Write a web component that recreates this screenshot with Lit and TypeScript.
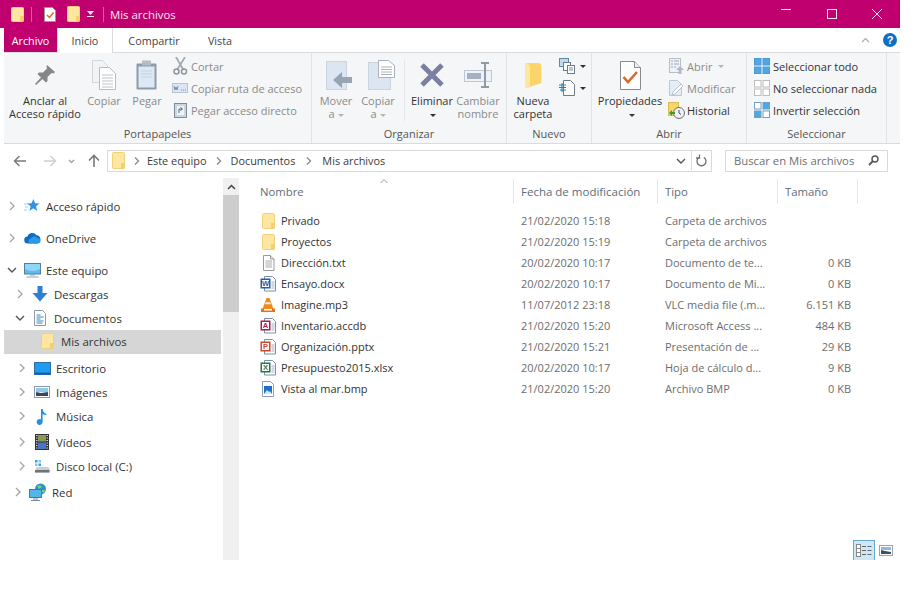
import { LitElement, css, html, svg } from "lit";
import { customElement } from "lit/decorators.js";

const ico = (w: number, h: number, body: unknown) =>
  html`<svg class="ico" width=${w} height=${h} viewBox="0 0 ${w} ${h}">${body}</svg>`;

const folder = (w = 14, h = 17) =>
  ico(w, h, svg`
    <rect x=".5" y=".5" width=${w - 1} height=${h - 1} rx="1" fill="#fde6a0" stroke="#f0d078"/>
    <path d="M${w - 4} ${h - 6}h3.5v5.5h-3.5z" fill="#f3cf70"/>`);

const doc = ico(13, 16, svg`
  <path d="M1.5.5h7l3.5 3.5v11.500h-10.500z" fill="#fff" stroke="#9a9a9a"/>
  <path d="M8.500.5v3.500h3.500" fill="#eee" stroke="#9a9a9a"/>
  <path d="M3.500 6h6.500M3.500 8h6.500M3.500 10h6.500M3.500 12h6.500" stroke="#aaa"/>`);

const office = (letter: string, color: string) =>
  ico(16, 16, svg`
    <path d="M4.500.5h8l3 3v11.500h-11z" fill="#fff" stroke="#7d8ea8"/>
    <path d="M11.500 6h3M11.500 8h3M11.500 10h3M11.500 12h3" stroke="#9eb0c8"/>
    <rect x=".5" y="2.500" width="10" height="10" fill=${color}/>
    <rect x="2" y="4" width="7" height="7" fill="#fff"/>
    <text x="5.500" y="10.200" text-anchor="middle" font-size="7.500" font-weight="700" font-family="Liberation Sans" fill=${color}>${letter}</text>`);

const vlc = ico(16, 16, svg`
  <path d="M6.500 1h3l4 11h-11z" fill="#ef8a1c"/>
  <path d="M5.600 5.200h4.800l.6 2h-6z" fill="#f2f2f2"/>
  <path d="M1 11.500h3v2h8v-2h3v3.500h-14z" fill="#e8741a"/>`);

const bmp = ico(14, 16, svg`
  <path d="M1.500.5h8l3 3v12h-11z" fill="#fff" stroke="#8aa0b8"/>
  <rect x="3" y="5" width="8" height="8" fill="#1f6fc4"/>
  <path d="M3 13l3-4 2 2 1-1 2 3z" fill="#cfe6fa"/>`);

const star = ico(16, 16, svg`
  <path d="M9.500 1l1.600 4.300 4.400.2-3.500 2.800 1.200 4.600-3.900-2.600-3.900 2.600 1.200-4.600-3.500-2.800 4.400-.2z" fill="#2f94e6"/>
  <path d="M0 6h4M1 9h3M0 12h3" stroke="#9fd0f5"/>`);

const cloud = ico(17, 12, svg`
  <path d="M4 11.500a3.500 3.500 0 0 1-.5-7 5 5 0 0 1 9-1.200 4.200 4.200 0 0 1 1 8.200z" fill="#0f6cc4"/>
  <path d="M6 11.500a2.500 2.500 0 0 1 .6-4.800 4 4 0 0 1 7-.4 2.600 2.600 0 0 1 .4 5.200z" fill="#2a9be8"/>`);

const monitor = ico(17, 15, svg`
  <rect x=".5" y=".5" width="16" height="10.500" fill="#5cbcf2" stroke="#5d7d96"/>
  <path d="M1 1h15v5q-7 4-15 0z" fill="#8fd6f8"/>
  <path d="M6 12h5M2.500 14h12" stroke="#8aa0b0" stroke-width="1.200"/>`);

const downArrow = ico(16, 16, svg`<path d="M5.500 0h5v7h5l-7.500 8.500-7.500-8.500h5z" fill="#2f7fd6"/>`);

const docsIco = ico(14, 16, svg`
  <path d="M1.500.5h8l3 3v12h-11z" fill="#fff" stroke="#8f9aa5"/>
  <path d="M3.500 5h4M3.500 7h7M3.500 9h4M3.500 11h7M3.500 13h6" stroke="#3f89b5"/>`);

const desk = ico(17, 13, svg`
  <rect x=".5" y=".5" width="16" height="12" fill="#1f9bef" stroke="#2f6ea3"/>
  <path d="M1 10.500h15v2h-15z" fill="#0e62b4"/>`);

const pics = ico(16, 12, svg`
  <rect x=".5" y=".5" width="15" height="11" fill="#fff" stroke="#8c9aa8"/>
  <path d="M2 2h12v4h-12z" fill="#8fc7ee"/>
  <path d="M2 6l5 1 7-1v4h-12z" fill="#33495e"/>`);

const note = ico(12, 17, svg`
  <path d="M5 1h1.600q.6 4 4.400 5.500-1.500 1-4.400-.6v8a3 3 0 1 1-1.600-2.600z" fill="#1e93e6"/>`);

const film = ico(14, 16, svg`
  <rect width="14" height="16" fill="#333"/>
  <path d="M1 1.500h1.500M1 4h1.500M1 6.500h1.500M1 9h1.500M1 11.500h1.500M1 14h1.500M11.500 1.500h1.500M11.500 4h1.500M11.500 6.500h1.500M11.500 9h1.500M11.500 11.500h1.500M11.500 14h1.500" stroke="#ddd"/>
  <rect x="3" y="1" width="8" height="6.500" fill="#8a9a55"/>
  <rect x="3" y="8.500" width="8" height="6.500" fill="#4a74c8"/>`);

const disk = ico(16, 14, svg`
  <rect x="1" y="1" width="2.500" height="2.500" fill="#2fa5e0"/>
  <rect x="4.500" y="1" width="2.500" height="2.500" fill="#7ccbee"/>
  <rect x="1" y="4.500" width="2.500" height="2.500" fill="#7ccbee"/>
  <rect x="4.500" y="4.500" width="2.500" height="2.500" fill="#2fa5e0"/>
  <path d="M2 9l1-1h11l1.500 1.500v4h-14.500z" fill="#c9ced2"/>
  <path d="M1 11h14.500v2.500h-14.500z" fill="#6d7378"/>`);

const network = ico(19, 18, svg`
  <circle cx="11.500" cy="6" r="5.500" fill="#2c8fd0"/>
  <path d="M8 3l3-1 2 2-3 2zM13 7l3 0-1 3-2-1z" fill="#7ed06a"/>
  <rect x=".5" y="6.500" width="12" height="8" fill="#52b6ee" stroke="#3c7da8"/>
  <path d="M4 16h5M2 17.500h9" stroke="#7a8e9e"/>`);

const chevRight = ico(8, 10, svg`<path d="M2 1l4 4-4 4" fill="none" stroke="#a6a6a6" stroke-width="1.400"/>`);
const chevDown = ico(10, 8, svg`<path d="M1 2l4 4 4-4" fill="none" stroke="#555" stroke-width="1.400"/>`);

const pin = ico(24, 24, svg`
  <path d="M14 2l8 7-1.500 1.500-2-.5-4 4 0 4-1.500 1.500-3.500-3.500-6.500 6-1-1 6-6.500-3.500-3.500 1.500-1.500 4 0 4-4-.5-2z" fill="#85868a"/>`);

const copyBig = ico(26, 30, svg`
  <path d="M1.500.5h10l5 5v17h-15z" fill="#f1f3f6" stroke="#d3d7dc"/>
  <path d="M8.500 7.500h10l6 6v16h-16z" fill="#fff" stroke="#b5bcc4"/>
  <path d="M11 15h11M11 18h11M11 21h11M11 24h11M11 27h11" stroke="#bcc3ca"/>`);

const paste = ico(22, 30, svg`
  <rect x=".5" y="3.500" width="20" height="26" rx="1" fill="#8e9aa8"/>
  <rect x="2.500" y="6.500" width="16" height="21" fill="#dce8f5"/>
  <rect x="6" y=".5" width="9" height="5" fill="#b4bcc5"/>
  <path d="M5 11h11M5 14h11M5 17h11" stroke="#c4d3e3"/>`);

const scissors = ico(15, 18, svg`
  <path d="M3 0l7.500 13M12 0l-8 13" stroke="#a5abb2" stroke-width="1.800" fill="none"/>
  <circle cx="3.500" cy="14.500" r="2.500" fill="none" stroke="#8e96a0" stroke-width="1.500"/>
  <circle cx="11" cy="14.500" r="2.500" fill="none" stroke="#8e96a0" stroke-width="1.500"/>`);

const pathIco = ico(16, 10, svg`
  <rect x=".5" y=".5" width="15" height="9" fill="#dce6f2" stroke="#b8c4d2"/>
  <path d="M2 3l1 4 1-3 1 3 1-4" stroke="#7c8ea4" fill="none"/>
  <path d="M9 7h1M11 7h1M13 7h1" stroke="#7c8ea4"/>`);

const shortcut = ico(13, 16, svg`
  <rect x=".5" y="1.500" width="12" height="14" fill="#c8d6e5" stroke="#7e8c9b"/>
  <rect x="3" y="4" width="7" height="9" fill="#eef3f8"/>
  <path d="M5 11v-4h3M6.500 5.500l2 1.500-2 1.500" fill="none" stroke="#566"/>`);

const move = ico(33, 29, svg`<g transform="translate(6)">
  <rect x=".5" y=".5" width="20" height="28" fill="#dce6f3" stroke="#cbd5e2"/>
  <path d="M26 16h-10v-5l-9 8 9 8v-5h10z" fill="#96a4b4"/></g>`);

const copyTo = ico(33, 30, svg`<g transform="translate(6)">
  <rect x=".5" y="2.500" width="22" height="27" fill="#dce6f3" stroke="#cbd5e2"/>
  <path d="M10.500.5h10l6 5v12h-16z" fill="#fff" stroke="#a9b1ba"/>
  <path d="M13 7h11M13 9.500h11M13 12h11M13 14.500h11" stroke="#aab2bb"/></g>`);

const cross = ico(26, 26, svg`<path d="M3 3l20 20M23 3l-20 20" stroke="#7a7fa3" stroke-width="5"/>`);

const rename = ico(28, 26, svg`
  <rect x=".5" y="8.500" width="27" height="11" fill="#eef3f8" stroke="#bcc8d6"/>
  <rect x="3" y="11" width="14" height="6" fill="#a5b1c2"/>
  <path d="M17 1h8M17 25h8M21 1v24" stroke="#8f9aa8" stroke-width="2"/>`);

const bigFolder = ico(19, 27, svg`
  <path d="M1 1h13q3 0 3.500 3v17l-15 5-1.500-2z" fill="#fbd569"/>
  <path d="M1 1q4 0 5 4v20l-3 1-2-2z" fill="#fde79c"/>`);

const newItem = ico(16, 16, svg`
  <rect x=".5" y=".5" width="9" height="8" fill="#c5d9ea" stroke="#5e8aa8"/>
  <rect x="4.500" y="4.500" width="7" height="8" fill="#fff" stroke="#6a7c8c"/>
  <rect x="8.500" y="7.500" width="7" height="8" fill="#fff" stroke="#6a7c8c"/>
  <path d="M10 10h4M10 12h4" stroke="#888"/>`);

const easyAccess = ico(16, 16, svg`
  <path d="M4.500.5h7l4 4v11h-11z" fill="#fff" stroke="#6e7a86"/>
  <path d="M0 5h7M0 7.500h7M1 10h6M3 3v9" stroke="#2a7db0"/>`);

const props = ico(21, 29, svg`
  <path d="M.5.5h14l6 6v22h-20z" fill="#fff" stroke="#8b8b8b"/>
  <path d="M14.500.5v6h6" fill="#eee" stroke="#8b8b8b"/>
  <path d="M3.500 16l4.500 5 9-10" fill="none" stroke="#e0662a" stroke-width="2.600"/>`);

const openIco = ico(15, 16, svg`
  <rect x=".5" y=".5" width="11" height="14" fill="#eef2f6" stroke="#b6bec8"/>
  <path d="M2 3h2M5 3h5M2 6h2M5 6h5M2 9h2M5 9h2" stroke="#98a4b2"/>
  <path d="M11 8l4 4h-2.500v4h-3v-4h-2.500z" fill="#b0bac4"/>`);

const modify = ico(15, 16, svg`
  <path d="M.5.5h8l4 4v11h-12z" fill="#e4edf7" stroke="#bcc8d6"/>
  <path d="M4 12l8-8 2 2-8 8-3 1z" fill="#fff" stroke="#b8c2cc"/>`);

const history = ico(17, 17, svg`
  <rect x=".5" y=".5" width="10" height="13" fill="#f5d768" stroke="#dcbc50"/>
  <circle cx="11" cy="11" r="5.500" fill="#eef0f2" stroke="#6e7276"/>
  <path d="M11 8v3l2 1.500" fill="none" stroke="#555"/>
  <path d="M1 11l3-3v2h3v2h-3v2z" fill="#3d9a3a"/>`);

const selGrid = (a: string, b: string, c: string, d: string, stroke: string) =>
  ico(16, 16, svg`
    <rect x=".5" y=".5" width="6.500" height="6.500" fill=${a} stroke=${stroke}/>
    <rect x="9" y=".5" width="6.500" height="6.500" fill=${b} stroke=${stroke}/>
    <rect x=".5" y="9" width="6.500" height="6.500" fill=${c} stroke=${stroke}/>
    <rect x="9" y="9" width="6.500" height="6.500" fill=${d} stroke=${stroke}/>`);

const checkDoc = ico(12, 15, svg`
  <path d="M.5.5h8l3 3v11h-11z" fill="#fff" stroke="#999"/>
  <path d="M3 8l2.500 2.500 4-5" fill="none" stroke="#e0662a" stroke-width="1.500"/>`);

const arrowLeft = (c: string) =>
  ico(14, 12, svg`<path d="M13 6h-11M6.500 1l-5 5 5 5" fill="none" stroke=${c} stroke-width="1.500"/>`);
const arrowRight = (c: string) =>
  ico(14, 12, svg`<path d="M1 6h11M7.500 1l5 5-5 5" fill="none" stroke=${c} stroke-width="1.500"/>`);
const arrowUp = ico(12, 14, svg`<path d="M6 13v-11M1 6.500l5-5 5 5" fill="none" stroke="#7a7a7a" stroke-width="1.600"/>`);
const caret = html`<i class="caret"></i>`;
const caretGray = html`<i class="caret gray"></i>`;

const navItems = [
  { label: "Acceso rápido", indent: 1, gap: 16, icon: star, open: false },
  { label: "OneDrive", indent: 1, gap: 8, icon: cloud, open: false },
  { label: "Este equipo", indent: 1, gap: 8, icon: monitor, open: true },
  { label: "Descargas", indent: 9, gap: 0, icon: downArrow, open: false },
  { label: "Documentos", indent: 9, gap: 0, icon: docsIco, open: true },
  { label: "Mis archivos", indent: 16, gap: 0, icon: folder(13, 16), open: false, selected: true },
  { label: "Escritorio", indent: 11, gap: 2, icon: desk, open: false },
  { label: "Imágenes", indent: 11, gap: 0, icon: pics, open: false },
  { label: "Música", indent: 11, gap: 0, icon: note, open: false },
  { label: "Vídeos", indent: 11, gap: 2, icon: film, open: false },
  { label: "Disco local (C:)", indent: 11, gap: 0, icon: disk, open: false },
  { label: "Red", indent: 7, gap: 2, icon: network, open: false },
];

const files = [
  { name: "Privado", icon: folder(13, 16), date: "21/02/2020 15:18", type: "Carpeta de archivos", size: "" },
  { name: "Proyectos", icon: folder(13, 16), date: "21/02/2020 15:19", type: "Carpeta de archivos", size: "" },
  { name: "Dirección.txt", icon: doc, date: "20/02/2020 10:17", type: "Documento de te...", size: "0 KB" },
  { name: "Ensayo.docx", icon: office("W", "#2a5ca8"), date: "20/02/2020 10:17", type: "Documento de Mi...", size: "0 KB" },
  { name: "Imagine.mp3", icon: vlc, date: "11/07/2012 23:18", type: "VLC media file (.m...", size: "6.151 KB" },
  { name: "Inventario.accdb", icon: office("A", "#a3204a"), date: "21/02/2020 15:20", type: "Microsoft Access ...", size: "484 KB" },
  { name: "Organización.pptx", icon: office("P", "#d24726"), date: "21/02/2020 15:21", type: "Presentación de ...", size: "29 KB" },
  { name: "Presupuesto2015.xlsx", icon: office("X", "#1f7a45"), date: "20/02/2020 10:17", type: "Hoja de cálculo d...", size: "9 KB" },
  { name: "Vista al mar.bmp", icon: bmp, date: "21/02/2020 15:20", type: "Archivo BMP", size: "0 KB" },
];

@customElement("app-root")
export class AppRoot extends LitElement {
  static styles = css`
    :host {
      display: block;
      width: 900px;
      height: 560px;
      overflow: hidden;
      font-family: "Open Sans", "Noto Sans", sans-serif;
      font-size: 11px;
      color: #3a3a3a;
      background: #fff;
    }
    .ico { display: block; flex: none; }

    .title {
      height: 28px;
      background: #c1006f;
      color: #fbe6f1;
      display: flex;
      align-items: center;
      padding-left: 11px;
    }
    .title .bar { width: 1px; height: 15px; background: #d65fa3; margin: 0 7px; }
    .title .name { font-size: 11.4px; margin-left: -1px; }
    .qa-doc { margin: 0 11px 0 5px; }
    .qa-arrow { margin: 0 2px 0 7px; border-bottom: 1px solid #f5e0eb; padding-bottom: 1px; }
    .winbtns { margin-left: auto; display: flex; }
    .winbtn { width: 45.5px; display: flex; justify-content: center; }

    .tabs {
      height: 24px;
      margin-left: 4px;
      display: flex;
      align-items: stretch;
      color: #444;
      font-size: 10.8px;
    }
    .tab { display: flex; align-items: center; justify-content: center; }
    .tab.tab-file { width: 53px; background: #c1006f; color: #fff; }
    .tab.tab-home {
      width: 56px;
      box-sizing: border-box;
      margin-bottom: -1px;
      background: #fff;
      border: 1px solid #dadbdc;
      border-width: 0 1px;
      position: relative;
    }
    .tab.tab-share { width: 82px; }
    .tab.tab-view { width: 50px; }
    .tabs-fill {
      flex: 1;
      display: flex;
      align-items: center;
      justify-content: flex-end;
      gap: 13px;
      padding-right: 3px;
    }
    .help {
      width: 14px;
      height: 14px;
      border-radius: 50%;
      background: #0f6fc6;
      color: #fff;
      font: 700 11px/14px "Liberation Sans", sans-serif;
      text-align: center;
    }

    .ribbon {
      height: 90px;
      margin-left: 4px;
      background: #f5f6f7;
      border-top: 1px solid #dadbdc;
      border-bottom: 1px solid #dadbdc;
      display: flex;
    }
    .group {
      display: flex;
      flex-direction: column;
      border-right: 1px solid #e2e3e4;
      box-sizing: border-box;
    }
    .g-clip { width: 308px; }
    .g-org { width: 195px; }
    .g-new { width: 85px; }
    .g-open { width: 155px; }
    .g-sel { width: 140px; }
    .g-body { flex: 1; display: flex; min-height: 0; }
    .g-label { height: 17px; line-height: 15px; text-align: center; color: #555; flex: none; }
    .big {
      display: flex;
      flex-direction: column;
      align-items: center;
      text-align: center;
      white-space: nowrap;
      line-height: 13px;
      color: #333;
      flex: none;
    }
    .big .slot {
      height: 38px;
      padding-top: 3px;
      display: flex;
      align-items: center;
      justify-content: center;
    }
    .big.off { color: #8a8a8a; }
    .w82 { width: 82px; }
    .w36 { width: 36px; }
    .w50 { width: 50px; }
    .w48 { width: 48px; }
    .w54 { width: 54px; }
    .w38 { width: 38px; }
    .w52 { width: 52px; }
    .w76 { width: 76px; }
    .vsep { width: 1px; height: 62px; margin: 6px 0 0 8px; background: #e6e7e8; flex: none; }
    .caret {
      display: inline-block;
      width: 0;
      height: 0;
      border: 3px solid transparent;
      border-top: 3px solid #333;
      border-bottom: 0;
      vertical-align: middle;
      margin-left: 3px;
    }
    .caret.gray { border-top-color: #b5b5b5; }
    .small-col { display: flex; flex-direction: column; padding-top: 2px; }
    .small {
      height: 22px;
      display: flex;
      align-items: center;
      gap: 3px;
      color: #333;
      white-space: nowrap;
    }
    .small.off { color: #8a8a8a; }
    .small .slot { width: 16px; display: flex; justify-content: center; }
    .col-new .small { gap: 2px; }
    .col-sel { margin-left: 7px; }

    .addr { height: 22px; margin-top: 6px; display: flex; align-items: center; }
    .nav-btns {
      width: 107px;
      flex: none;
      display: flex;
      align-items: center;
      padding-left: 13px;
      box-sizing: border-box;
    }
    .nav-btns .fwd { margin-left: 16px; }
    .nav-btns .drop { margin-left: 11px; }
    .nav-btns .up { margin-left: 13px; }
    .path {
      width: 605px;
      flex: none;
      height: 22px;
      box-sizing: border-box;
      border: 1px solid #d9d9d9;
      display: flex;
      align-items: center;
      padding: 0 0 1px 4px;
      font-size: 10.9px;
    }
    .path .crumb { margin: 0 9px 0 9px; }
    .path .last { margin: 0 10px 0 11px; }
    .path .first { margin-left: 9px; margin-right: 7px; }
    .path .end {
      margin-left: auto;
      height: 100%;
      display: flex;
      align-items: center;
      gap: 5px;
    }
    .refresh {
      width: 19px;
      height: 100%;
      border-left: 1px solid #d9d9d9;
      display: flex;
      align-items: center;
      justify-content: center;
    }
    .search {
      width: 163px;
      margin-left: 13px;
      flex: none;
      height: 22px;
      box-sizing: border-box;
      border: 1px solid #d9d9d9;
      display: flex;
      align-items: center;
      justify-content: space-between;
      padding: 0 8px 1px;
      font-size: 11.3px;
      color: #6f6f6f;
    }

    .content { height: 382px; margin-top: 6px; display: flex; }
    .tree { width: 223px; flex: none; padding: 0 2px 0 4px; box-sizing: border-box; font-size: 11.4px; }
    .row { height: 24px; box-sizing: border-box; display: flex; align-items: center; color: #333; }
    .row.selected { background: #d6d6d6; padding-bottom: 2px; }
    .row .arrow { width: 14px; display: flex; justify-content: center; flex: none; }
    .row .pic { width: 18px; display: flex; justify-content: center; flex: none; margin: 0 5px 0 4px; }
    .scroll { width: 16px; flex: none; background: #f0f0f0; }
    .scroll .up { height: 17px; display: flex; align-items: center; justify-content: center; }
    .scroll .thumb { height: 117px; background: #cdcdcd; }

    .pane { flex: 1; display: flex; flex-direction: column; min-width: 0; }
    .list { flex: 1; position: relative; }
    .sort { position: absolute; left: 141px; top: 1px; }
    .cols { display: grid; grid-template-columns: 275px 144px 120px 80px; }
    .head { height: 25px; margin-top: 1px; color: #606c78; font-size: 11.3px; }
    .head > div { border-right: 1px solid #e5e5e5; padding-left: 7px; display: flex; align-items: center; }
    .head > div:first-child { padding-left: 21px; }
    .head .date { font-size: 11.5px; }
    .files { padding-top: 6px; }
    .frow { height: 21px; align-items: center; color: #6d6d6d; }
    .frow > div { padding-left: 7px; white-space: nowrap; }
    .frow .fname { padding-left: 21px; display: flex; align-items: center; color: #333; }
    .frow .fico { width: 16px; margin-right: 5px; display: flex; justify-content: center; }
    .frow .fsize { padding: 0 7px 0 0; text-align: right; }

    .views {
      height: 20px;
      display: flex;
      justify-content: flex-end;
      align-items: flex-start;
      padding-right: 7px;
      flex: none;
    }
    .views .on {
      width: 22px;
      height: 20px;
      box-sizing: border-box;
      background: #cce8f6;
      border: 1px solid #6aa8d4;
      border-bottom: 0;
      display: flex;
      justify-content: center;
      padding-top: 3px;
    }
    .views .off { margin: 5px 0 0 4px; }
  `;

  renderBig(label: unknown, icon: unknown, cls: string, off = false) {
    return html`<div class="big ${cls} ${off ? "off" : ""}">
      <div class="slot">${icon}</div>
      <div>${label}</div>
    </div>`;
  }

  renderSmall(label: unknown, icon: unknown, off = false) {
    return html`<div class="small ${off ? "off" : ""}"><span class="slot">${icon}</span>${label}</div>`;
  }

  renderTitle() {
    return html`<div class="title">
      ${folder(13, 15)}
      <span class="bar"></span>
      <span class="qa-doc">${checkDoc}</span>
      ${folder(13, 16)}
      <span class="qa-arrow">${ico(7, 4, svg`<path d="M0 0h7l-3.500 4z" fill="#fbe6f1"/>`)}</span>
      <span class="bar"></span>
      <span class="name">Mis archivos</span>
      <div class="winbtns">
        <div class="winbtn">${ico(10, 1, svg`<rect width="10" height="1" fill="#fbe6f1"/>`)}</div>
        <div class="winbtn">${ico(10, 10, svg`<rect x=".5" y=".5" width="9" height="9" fill="none" stroke="#fbe6f1"/>`)}</div>
        <div class="winbtn">${ico(10, 10, svg`<path d="M0 0l10 10M10 0l-10 10" stroke="#fbe6f1"/>`)}</div>
      </div>
    </div>`;
  }

  renderTabs() {
    return html`<div class="tabs">
      <div class="tab tab-file">Archivo</div>
      <div class="tab tab-home">Inicio</div>
      <div class="tab tab-share">Compartir</div>
      <div class="tab tab-view">Vista</div>
      <div class="tabs-fill">
        ${ico(9, 6, svg`<path d="M1 5l3.500-3.500 3.500 3.500" fill="none" stroke="#aaa" stroke-width="1.100"/>`)}
        <div class="help">?</div>
      </div>
    </div>`;
  }

  renderRibbon() {
    return html`<div class="ribbon">
      <div class="group g-clip">
        <div class="g-body">
          ${this.renderBig(html`Anclar al<br />Acceso rápido`, pin, "w82")}
          ${this.renderBig("Copiar", copyBig, "w36", true)}
          ${this.renderBig("Pegar", paste, "w50", true)}
          <div class="small-col">
            ${this.renderSmall("Cortar", scissors, true)}
            ${this.renderSmall("Copiar ruta de acceso", pathIco, true)}
            ${this.renderSmall("Pegar acceso directo", shortcut, true)}
          </div>
        </div>
        <div class="g-label">Portapapeles</div>
      </div>
      <div class="group g-org">
        <div class="g-body">
          ${this.renderBig(html`Mover<br />a${caretGray}`, move, "w48", true)}
          ${this.renderBig(html`Copiar<br />a${caretGray}`, copyTo, "w36", true)}
          <div class="vsep"></div>
          ${this.renderBig(html`Eliminar<br />${caret}`, cross, "w54")}
          ${this.renderBig(html`Cambiar<br />nombre`, rename, "w38", true)}
        </div>
        <div class="g-label">Organizar</div>
      </div>
      <div class="group g-new">
        <div class="g-body">
          ${this.renderBig(html`Nueva<br />carpeta`, bigFolder, "w52")}
          <div class="small-col col-new">
            ${this.renderSmall(caret, newItem)}
            ${this.renderSmall(caret, easyAccess)}
          </div>
        </div>
        <div class="g-label">Nuevo</div>
      </div>
      <div class="group g-open">
        <div class="g-body">
          ${this.renderBig(html`Propiedades<br />${caret}`, props, "w76")}
          <div class="small-col">
            ${this.renderSmall(html`Abrir${caretGray}`, openIco, true)}
            ${this.renderSmall("Modificar", modify, true)}
            ${this.renderSmall("Historial", history)}
          </div>
        </div>
        <div class="g-label">Abrir</div>
      </div>
      <div class="group g-sel">
        <div class="g-body">
          <div class="small-col col-sel">
            ${this.renderSmall("Seleccionar todo", selGrid("#4fa8e4", "#4fa8e4", "#4fa8e4", "#4fa8e4", "#4f9ad4"))}
            ${this.renderSmall("No seleccionar nada", selGrid("#fff", "#fff", "#fff", "#fff", "#bdbdbd"))}
            ${this.renderSmall("Invertir selección", selGrid("#fff", "#4fa8e4", "#4fa8e4", "#fff", "#6f9fc4"))}
          </div>
        </div>
        <div class="g-label">Seleccionar</div>
      </div>
    </div>`;
  }

  renderAddress() {
    const sep = ico(6, 8, svg`<path d="M1 .5l3.500 3.500-3.500 3.500" fill="none" stroke="#8a8a8a" stroke-width="1.300"/>`);
    return html`<div class="addr">
      <div class="nav-btns">
        ${arrowLeft("#7a7a7a")}
        <span class="fwd">${arrowRight("#d0d0d0")}</span>
        <span class="drop">${ico(7, 5, svg`<path d="M1 1l2.500 2.500 2.500-2.500" fill="none" stroke="#999" stroke-width="1.200"/>`)}</span>
        <span class="up">${arrowUp}</span>
      </div>
      <div class="path">
        ${folder(13, 17)}
        <span class="first">${sep}</span>
        Este equipo
        <span class="crumb">${sep}</span>
        Documentos
        <span class="last">${sep}</span>
        Mis archivos
        <div class="end">
          ${chevDown}
          <div class="refresh">
            ${ico(11, 13, svg`<path d="M3 3.500a4.500 4.500 0 1 0 5 0M3.500 .5v3.500h-3.500" fill="none" stroke="#707070" stroke-width="1.300"/>`)}
          </div>
        </div>
      </div>
      <div class="search">
        Buscar en Mis archivos
        ${ico(11, 11, svg`<circle cx="7" cy="4" r="3" fill="none" stroke="#555" stroke-width="1.400"/><path d="M5 6l-4 4" stroke="#555" stroke-width="1.800"/>`)}
      </div>
    </div>`;
  }

  renderTree() {
    return html`<div class="tree">
      ${navItems.map(
        (n) => html`<div
          class="row ${n.selected ? "selected" : ""}"
          style="margin-top:${n.gap}px;padding-left:${n.indent}px"
        >
          <span class="arrow">${n.selected ? "" : n.open ? chevDown : chevRight}</span>
          <span class="pic">${n.icon}</span>
          ${n.label}
        </div>`
      )}
    </div>`;
  }

  renderList() {
    return html`<div class="pane">
      <div class="list">
        <span class="sort">${ico(8, 5, svg`<path d="M.5 4l3.500-3.500 3.500 3.500" fill="none" stroke="#9a9a9a"/>`)}</span>
        <div class="cols head">
          <div>Nombre</div>
          <div class="date">Fecha de modificación</div>
          <div>Tipo</div>
          <div>Tamaño</div>
        </div>
        <div class="files">
          ${files.map(
            (f) => html`<div class="cols frow">
              <div class="fname"><span class="fico">${f.icon}</span>${f.name}</div>
              <div>${f.date}</div>
              <div>${f.type}</div>
              <div class="fsize">${f.size}</div>
            </div>`
          )}
        </div>
      </div>
      <div class="views">
        <div class="on">
          ${ico(16, 14, svg`
            <rect x=".5" y=".5" width="4" height="4" fill="#fff" stroke="#888"/>
            <rect x=".5" y="4.500" width="4" height="4" fill="#fff" stroke="#888"/>
            <rect x=".5" y="8.500" width="4" height="4" fill="#fff" stroke="#888"/>
            <path d="M6 2.500h4M11.500 2.500h4M6 6.500h4M11.500 6.500h4M6 10.500h4M11.500 10.500h4" stroke="#666"/>`)}
        </div>
        <div class="off">
          ${ico(14, 11, svg`
            <rect x=".5" y=".5" width="13" height="10" fill="#fff" stroke="#9aa2aa"/>
            <path d="M2 2h10v3h-10z" fill="#8fb8ee"/>
            <path d="M2 5l4 1 6 1v2h-10z" fill="#3f4f5c"/>`)}
        </div>
      </div>
    </div>`;
  }

  render() {
    return html`
      ${this.renderTitle()} ${this.renderTabs()} ${this.renderRibbon()} ${this.renderAddress()}
      <div class="content">
        ${this.renderTree()}
        <div class="scroll">
          <div class="up">${ico(9, 6, svg`<path d="M1 5l3.500-3.500 3.500 3.500" fill="none" stroke="#444" stroke-width="1.500"/>`)}</div>
          <div class="thumb"></div>
        </div>
        ${this.renderList()}
      </div>
    `;
  }
}
